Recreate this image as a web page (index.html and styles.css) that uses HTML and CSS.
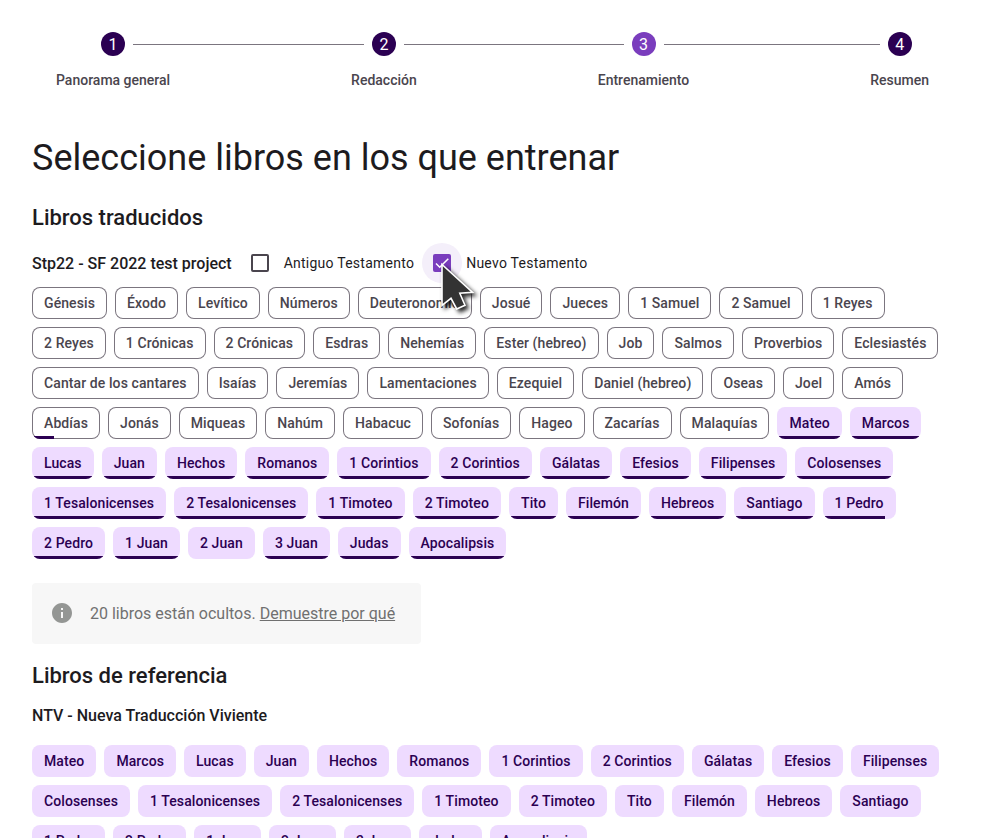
FILE: index.html
```html
<!DOCTYPE html>
<html lang="es">
<head>
<meta charset="utf-8">
<title>Seleccione libros</title>
<link rel="stylesheet" href="styles.css">
</head>
<body>
<main class="page">
  <nav class="stepper">
    <div class="step first"><div class="track"><b>1</b></div><span>Panorama general</span></div>
    <i class="connector"></i>
    <div class="step"><div class="track"><b>2</b></div><span>Redacción</span></div>
    <i class="connector"></i>
    <div class="step active"><div class="track"><b>3</b></div><span>Entrenamiento</span></div>
    <i class="connector"></i>
    <div class="step last"><div class="track"><b>4</b></div><span>Resumen</span></div>
  </nav>
  <h1>Seleccione libros en los que entrenar</h1>
  <h2>Libros traducidos</h2>
  <div class="project">
    <h3>Stp22 - SF 2022 test project</h3>
    <label class="check"><span class="halo"><span class="box"></span></span>Antiguo Testamento</label>
    <label class="check"><span class="halo on"><span class="box"><svg viewBox="0 0 24 24"><path d="M1.73,12.91 8.1,19.28 22.79,4.59"/></svg></span>
      <svg class="cursor" viewBox="0 0 40 56"><path d="M3 2.5V43.3L12 36.3L17.7 47L26 43.3L20.8 31.3L33.6 30.3Z"/></svg></span>Nuevo Testamento</label>
  </div>
  <div class="chips">
    <span class="chip">Génesis</span><span class="chip">Éxodo</span><span class="chip">Levítico</span><span class="chip">Números</span><span class="chip">Deuteronomio</span><span class="chip">Josué</span><span class="chip">Jueces</span><span class="chip">1 Samuel</span><span class="chip">2 Samuel</span><span class="chip">1 Reyes</span>
    <span class="chip">2 Reyes</span><span class="chip">1 Crónicas</span><span class="chip">2 Crónicas</span><span class="chip">Esdras</span><span class="chip">Nehemías</span><span class="chip">Ester (hebreo)</span><span class="chip">Job</span><span class="chip">Salmos</span><span class="chip">Proverbios</span><span class="chip">Eclesiastés</span>
    <span class="chip">Cantar de los cantares</span><span class="chip">Isaías</span><span class="chip">Jeremías</span><span class="chip">Lamentaciones</span><span class="chip">Ezequiel</span><span class="chip">Daniel (hebreo)</span><span class="chip">Oseas</span><span class="chip">Joel</span><span class="chip">Amós</span>
    <span class="chip">Abdías<i class="bar" style="width:33%"></i></span><span class="chip">Jonás</span><span class="chip">Miqueas</span><span class="chip">Nahúm</span><span class="chip">Habacuc</span><span class="chip">Sofonías</span><span class="chip">Hageo</span><span class="chip">Zacarías</span><span class="chip">Malaquías</span><span class="chip sel">Mateo<i class="bar"></i></span><span class="chip sel">Marcos<i class="bar"></i></span>
    <span class="chip sel">Lucas<i class="bar"></i></span><span class="chip sel">Juan<i class="bar"></i></span><span class="chip sel">Hechos<i class="bar"></i></span><span class="chip sel">Romanos<i class="bar"></i></span><span class="chip sel">1 Corintios<i class="bar"></i></span><span class="chip sel">2 Corintios<i class="bar"></i></span><span class="chip sel">Gálatas<i class="bar"></i></span><span class="chip sel">Efesios<i class="bar"></i></span><span class="chip sel">Filipenses<i class="bar"></i></span><span class="chip sel">Colosenses<i class="bar"></i></span>
    <span class="chip sel">1 Tesalonicenses<i class="bar"></i></span><span class="chip sel">2 Tesalonicenses<i class="bar"></i></span><span class="chip sel">1 Timoteo<i class="bar"></i></span><span class="chip sel">2 Timoteo<i class="bar"></i></span><span class="chip sel">Tito<i class="bar"></i></span><span class="chip sel">Filemón<i class="bar"></i></span><span class="chip sel">Hebreos<i class="bar"></i></span><span class="chip sel">Santiago<i class="bar"></i></span><span class="chip sel">1 Pedro<i class="bar" style="width:85%"></i></span>
    <span class="chip sel">2 Pedro<i class="bar"></i></span><span class="chip sel">1 Juan<i class="bar"></i></span><span class="chip sel">2 Juan</span><span class="chip sel">3 Juan<i class="bar"></i></span><span class="chip sel">Judas<i class="bar"></i></span><span class="chip sel">Apocalipsis<i class="bar"></i></span>
  </div>
  <div class="notice">
    <svg viewBox="0 0 24 24"><path d="M12 2C6.48 2 2 6.48 2 12s4.48 10 10 10 10-4.48 10-10S17.52 2 12 2zm1 15h-2v-6h2v6zm0-8h-2V7h2v2z"/></svg>
    <p>20 libros están ocultos. <u>Demuestre por qué</u></p>
  </div>
  <h2>Libros de referencia</h2>
  <h3 class="reference">NTV - Nueva Traducción Viviente</h3>
  <div class="chips">
    <span class="chip sel">Mateo</span><span class="chip sel">Marcos</span><span class="chip sel">Lucas</span><span class="chip sel">Juan</span><span class="chip sel">Hechos</span><span class="chip sel">Romanos</span><span class="chip sel">1 Corintios</span><span class="chip sel">2 Corintios</span><span class="chip sel">Gálatas</span><span class="chip sel">Efesios</span><span class="chip sel">Filipenses</span>
    <span class="chip sel">Colosenses</span><span class="chip sel">1 Tesalonicenses</span><span class="chip sel">2 Tesalonicenses</span><span class="chip sel">1 Timoteo</span><span class="chip sel">2 Timoteo</span><span class="chip sel">Tito</span><span class="chip sel">Filemón</span><span class="chip sel">Hebreos</span><span class="chip sel">Santiago</span>
    <span class="chip sel">1 Pedro</span><span class="chip sel">2 Pedro</span><span class="chip sel">1 Juan</span><span class="chip sel">2 Juan</span><span class="chip sel">3 Juan</span><span class="chip sel">Judas</span><span class="chip sel">Apocalipsis</span>
  </div>
</main>
</body>
</html>
```
FILE: styles.css
```css
* { box-sizing: border-box; }
html, body { margin: 0; height: 100%; }
body { overflow: hidden; background: #fff; color: #1d1b1e; font-family: Roboto, sans-serif; }
.page { padding: 32px 32px 0; height: 838px; overflow: hidden; }
h1, h2, h3, p { margin: 0; }

.stepper { display: flex; align-items: flex-start; height: 103px; }
.step { display: flex; flex-direction: column; }
.step > span { padding: 0 24px; margin-top: 14px; font-size: 14px; line-height: 20px; font-weight: 500; color: #4a454e; }
.track { display: flex; align-items: center; gap: 8px; height: 24px; }
.track::before, .track::after { content: ""; flex: 1; height: 1px; margin-top: 1px; background: #7b757f; }
.first .track::before, .last .track::after { visibility: hidden; }
.track b { width: 24px; height: 24px; border-radius: 50%; background: #2b0052; color: #fff; font-size: 16px; font-weight: 400; line-height: 25px; text-align: center; }
.active .track b { background: #7a3dbd; }
.connector { flex: 1; height: 1px; margin-top: 12px; background: #7b757f; }

h1 { font-size: 36px; line-height: 46px; font-weight: 400; }
h2 { margin-top: 23px; font-size: 22px; line-height: 28px; font-weight: 500; }
h3 { font-size: 16px; line-height: 24px; font-weight: 500; }

.project { display: flex; align-items: center; height: 40px; margin: 11px 0 4px; }
.project h3 { margin-right: 8px; padding-top: 1px; }
.check { display: flex; align-items: center; gap: 4px; margin-right: 8px; font-size: 14px; letter-spacing: .25px; }
.halo { position: relative; display: grid; place-items: center; width: 40px; height: 40px; border-radius: 50%; }
.halo.on { background: #f4effa; }
.box { display: block; width: 18px; height: 18px; border: 2px solid #4a454e; border-radius: 2px; }
.on .box { border: 0; padding: 2px; background: #7a3dbd; }
.box svg { display: block; width: 14px; height: 14px; fill: none; stroke: #fff; stroke-width: 2.6; }
.cursor { position: absolute; left: 17px; top: 19px; z-index: 5; width: 40px; height: 56px; overflow: visible; fill: #333; stroke: #fff; stroke-width: 1.6; filter: drop-shadow(3px 3px 2px rgba(0, 0, 0, .85)); }

.chips { display: flex; flex-wrap: wrap; gap: 8px; }
.chip { position: relative; display: block; height: 32px; padding: 0 12px; overflow: hidden; border-radius: 8px; box-shadow: inset 0 0 0 1px #7b757f; color: #4a454e; font-size: 14px; line-height: 32px; font-weight: 500; letter-spacing: .096px; white-space: nowrap; }
.chip.sel { background: #eedbff; box-shadow: none; color: #2b0052; }
.bar { position: absolute; left: 0; bottom: 0; width: 100%; height: 3px; background: #2b0052; }

.notice { display: flex; align-items: center; width: 389px; height: 61px; margin-top: 24px; padding: 0 18px; border-radius: 4px; background: #f7f7f7; color: #707070; }
.notice svg { width: 24px; height: 24px; margin: 0 16px 1px 0; fill: #949694; }
.notice p { font-size: 16px; line-height: 24px; white-space: nowrap; }
.notice + h2 { margin-top: 18px; }
.reference { margin: 14px 0 17px; }
```
